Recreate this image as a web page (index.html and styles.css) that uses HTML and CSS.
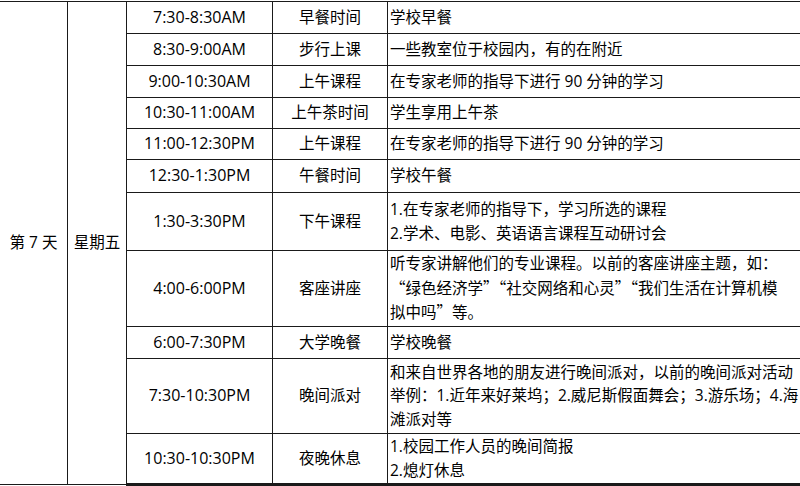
FILE: index.html
```html
<!DOCTYPE html>
<html lang="zh-CN">
<head>
<meta charset="utf-8">
<link rel="stylesheet" href="styles.css">
</head>
<body>
<table class="sched">
  <colgroup>
    <col class="c-day">
    <col class="c-week">
    <col class="c-time">
    <col class="c-act">
    <col class="c-desc">
  </colgroup>
  <tbody>
    <tr class="h32">
      <td class="day" rowspan="11">第 7 天</td>
      <td class="week" rowspan="11">星期五</td>
      <td class="time">7:30-8:30AM</td>
      <td class="act">早餐时间</td>
      <td class="desc">学校早餐</td>
    </tr>
    <tr class="h32">
      <td class="time">8:30-9:00AM</td>
      <td class="act">步行上课</td>
      <td class="desc">一些教室位于校园内，有的在附近</td>
    </tr>
    <tr class="h32">
      <td class="time">9:00-10:30AM</td>
      <td class="act">上午课程</td>
      <td class="desc">在专家老师的指导下进行 90 分钟的学习</td>
    </tr>
    <tr class="h31">
      <td class="time">10:30-11:00AM</td>
      <td class="act">上午茶时间</td>
      <td class="desc">学生享用上午茶</td>
    </tr>
    <tr class="h31">
      <td class="time">11:00-12:30PM</td>
      <td class="act">上午课程</td>
      <td class="desc">在专家老师的指导下进行 90 分钟的学习</td>
    </tr>
    <tr class="h33">
      <td class="time">12:30-1:30PM</td>
      <td class="act">午餐时间</td>
      <td class="desc">学校午餐</td>
    </tr>
    <tr class="h58">
      <td class="time">1:30-3:30PM</td>
      <td class="act">下午课程</td>
      <td class="desc">1.在专家老师的指导下，学习所选的课程<br>2.学术、电影、英语语言课程互动研讨会</td>
    </tr>
    <tr class="h76">
      <td class="time">4:00-6:00PM</td>
      <td class="act">客座讲座</td>
      <td class="desc">听专家讲解他们的专业课程。以前的客座讲座主题，如：<br><span class="q">“</span>绿色经济学<span class="q">”</span><span class="q">“</span>社交网络和心灵<span class="q">”</span><span class="q">“</span>我们生活在计算机模<br>拟中吗<span class="q">”</span>等。</td>
    </tr>
    <tr class="h32">
      <td class="time">6:00-7:30PM</td>
      <td class="act">大学晚餐</td>
      <td class="desc">学校晚餐</td>
    </tr>
    <tr class="h75">
      <td class="time">7:30-10:30PM</td>
      <td class="act">晚间派对</td>
      <td class="desc">和来自世界各地的朋友进行晚间派对，以前的晚间派对活动<br>举例：1.近年来好莱坞；2.威尼斯假面舞会；3.游乐场；4.海<br>滩派对等</td>
    </tr>
    <tr class="h51 last">
      <td class="time">10:30-10:30PM</td>
      <td class="act">夜晚休息</td>
      <td class="desc">1.校园工作人员的晚间简报<br>2.熄灯休息</td>
    </tr>
  </tbody>
</table>
</body>
</html>
```

FILE: styles.css
```css
html, body {
  margin: 0;
  padding: 0;
  background: #fff;
  overflow: hidden;
}

body {
  font-family: "Open Sans", "Noto Sans CJK SC", sans-serif;
  font-size: 15.5px;
  color: #000;
}

.sched {
  border-collapse: collapse;
  table-layout: fixed;
  width: 813px;
  margin: 1px 0 0 -1px;
}

.c-day { width: 68px; }
.c-week { width: 59px; }
.c-time { width: 146px; }
.c-act { width: 115px; }
.c-desc { width: 425px; }

.sched td {
  border: 1px solid #1a1a1a;
  padding: 0;
  line-height: 23.5px;
  vertical-align: middle;
  white-space: nowrap;
  overflow: hidden;
}

.day, .week, .time, .act {
  text-align: center;
}

.time {
  font-size: 16px;
}

.desc {
  text-align: left;
  padding-left: 2px !important;
}

.q {
  font-family: "Noto Sans CJK SC", sans-serif;
  font-feature-settings: "fwid" 1;
}

.h31 { height: 31px; }
.h32 { height: 32px; }
.h33 { height: 33px; }
.h51 { height: 51px; }
.h58 { height: 58px; }
.h75 { height: 75px; }
.h76 { height: 76px; }

.last td,
.day,
.week {
  border-bottom: 3px solid #1a1a1a;
}
```
